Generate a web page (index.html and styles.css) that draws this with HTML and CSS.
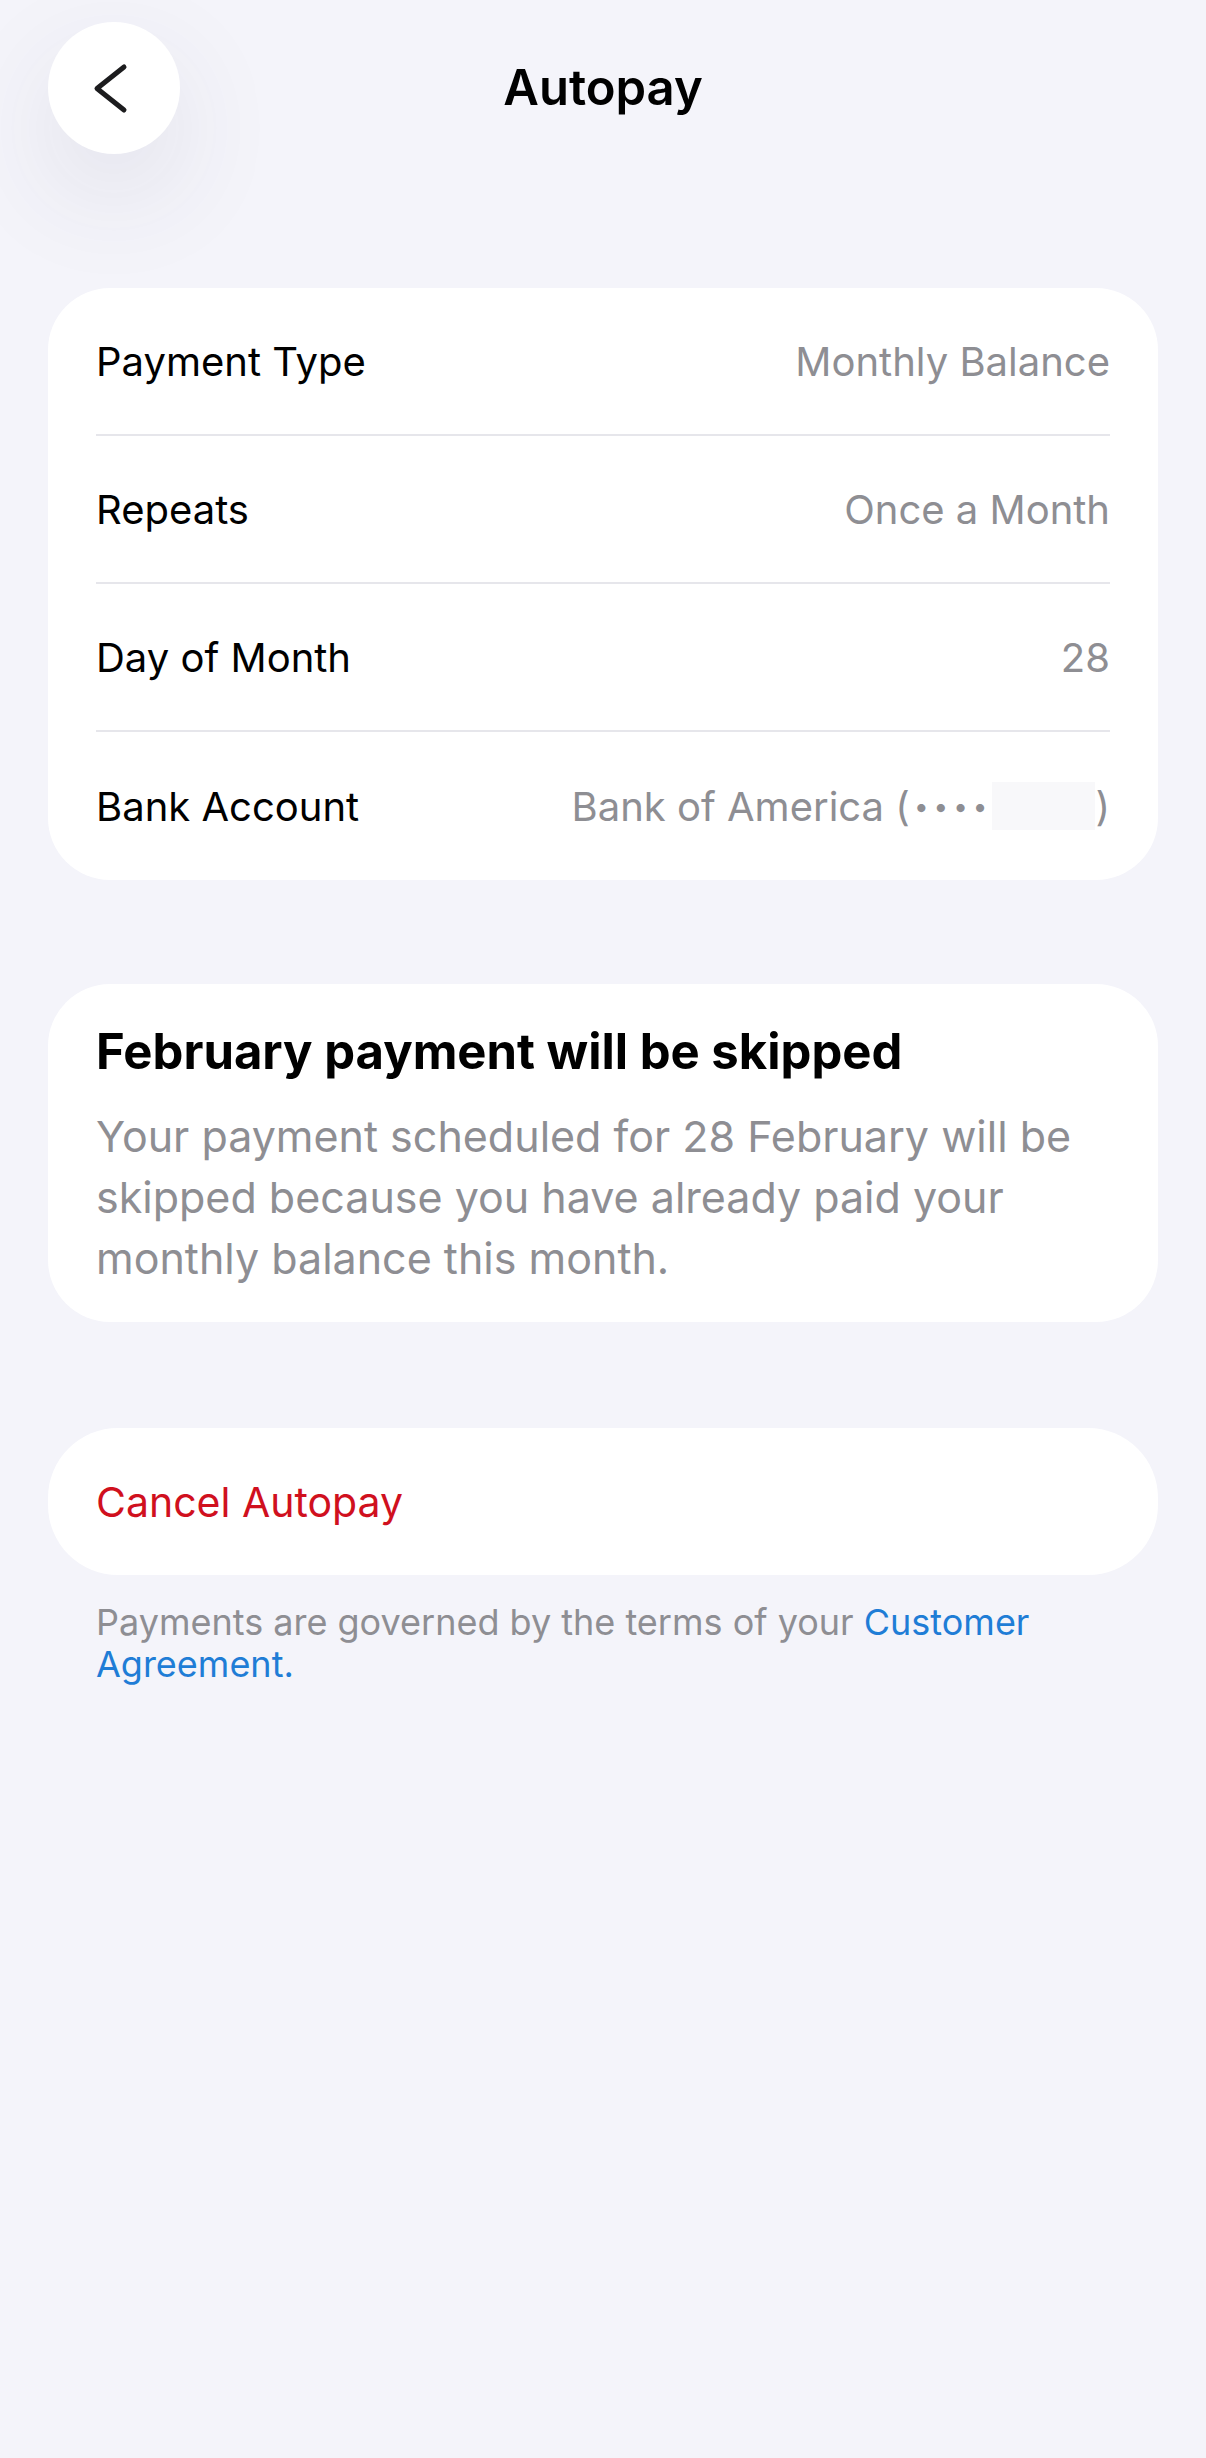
FILE: index.html
```html
<!DOCTYPE html>
<html lang="en">
<head>
    <meta charset="UTF-8">
    <meta name="viewport" content="width=device-width, initial-scale=1.0">
    <title>Autopay</title>
    <link rel="stylesheet" href="styles.css">
</head>
<body>
    <div id="screen">
        <header class="nav">
            <button class="back-btn" aria-label="Back">
                <svg width="132" height="132" viewBox="0 0 132 132">
                    <path d="M76 45 L49 66.5 L76 88" fill="none" stroke="#1c1c1e" stroke-width="5" stroke-linecap="round" stroke-linejoin="round"/>
                </svg>
            </button>
            <h1 class="nav-title">Autopay</h1>
            <span class="nav-spacer"></span>
        </header>

        <section class="card details">
            <div class="row">
                <span class="label">Payment Type</span>
                <span class="value">Monthly Balance</span>
            </div>
            <div class="row">
                <span class="label">Repeats</span>
                <span class="value">Once a Month</span>
            </div>
            <div class="row">
                <span class="label">Day of Month</span>
                <span class="value">28</span>
            </div>
            <div class="row">
                <span class="label">Bank Account</span>
                <span class="value">Bank of America (<span class="dots">••••</span><span class="masked"></span>)</span>
            </div>
        </section>

        <section class="card notice">
            <h2>February payment will be skipped</h2>
            <p>Your payment scheduled for 28 February will be skipped because you have already paid your monthly balance this month.</p>
        </section>

        <section class="card cancel">
            <span>Cancel Autopay</span>
        </section>

        <p class="terms">Payments are governed by the terms of your <a href="#">Customer</a> <a href="#">Agreement.</a></p>
    </div>
</body>
</html>
```

FILE: styles.css
```css
body {
    font-family: 'Inter', 'Liberation Sans', sans-serif;
    background-color: #f4f4fa;
    color: #000;
    margin: 0;
    padding: 0;
}

#screen {
    padding: 0 48px;
}

.nav {
    display: grid;
    grid-template-columns: 132px 1fr 132px;
    align-items: center;
    padding-top: 22px;
    margin-bottom: 134px;
}

.back-btn {
    width: 132px;
    height: 132px;
    border: none;
    padding: 0;
    border-radius: 50%;
    background-color: #ffffff;
    box-shadow: 0 40px 110px rgba(60, 60, 90, 0.1);
    display: flex;
}

.nav-title {
    margin: 0;
    text-align: center;
    font-size: 49px;
    font-weight: 600;
    line-height: 60px;
}

.card {
    background-color: #ffffff;
    border-radius: 62px;
    padding: 0 48px;
}

.details {
    margin-bottom: 104px;
}

.row {
    height: 146px;
    display: flex;
    align-items: center;
    justify-content: space-between;
    border-bottom: 2px solid #e6e6eb;
    font-size: 40px;
}

.row:last-child {
    border-bottom: none;
    height: 148px;
}

.value {
    color: #8e8e93;
    display: flex;
    align-items: center;
}

.dots {
    font-size: 26px;
    letter-spacing: 5px;
    margin-left: 4px;
}

.masked {
    display: inline-block;
    width: 103px;
    height: 48px;
    background-color: #f8f8fa;
}

.notice {
    padding-top: 38px;
    padding-bottom: 33px;
    margin-bottom: 106px;
}

.notice h2 {
    margin: 0 0 24px;
    font-size: 49px;
    font-weight: 700;
    line-height: 60px;
}

.notice p {
    margin: 0;
    font-size: 43px;
    line-height: 61px;
    color: #8e8e93;
}

.cancel {
    height: 147px;
    display: flex;
    align-items: center;
    border-radius: 70px;
    font-size: 41px;
    color: #d0101e;
}

.terms {
    margin: 26px 0 0;
    padding: 0 48px;
    font-size: 36px;
    line-height: 42px;
    color: #8e8e93;
}

.terms a {
    color: #1f7dd6;
    text-decoration: none;
}
```
